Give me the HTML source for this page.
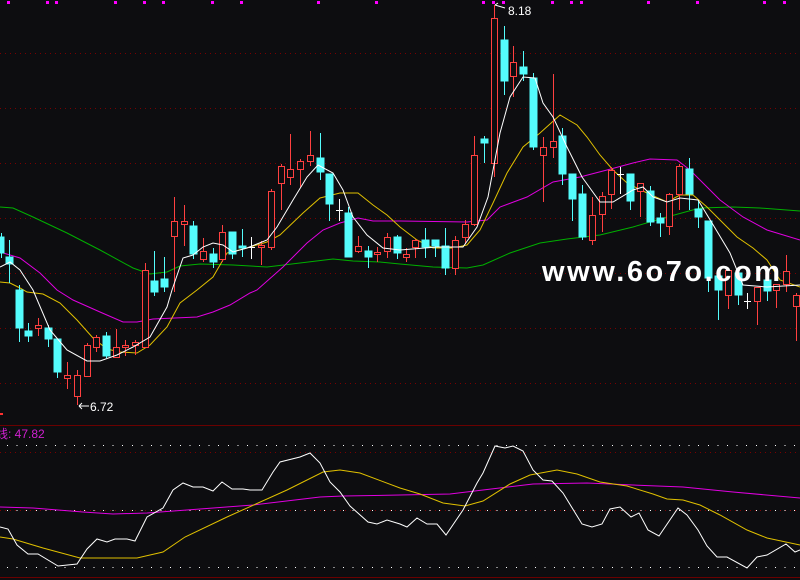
<!DOCTYPE html>
<html><head><meta charset="utf-8"><style>
html,body{margin:0;padding:0;background:#0d0d10;}
svg{display:block}
.t{font-family:"Liberation Sans","Noto Sans CJK SC",sans-serif}
</style></head><body>
<svg width="800" height="580" viewBox="0 0 800 580" xmlns="http://www.w3.org/2000/svg" shape-rendering="crispEdges">
<rect width="800" height="580" fill="#0d0d10"/>
<g stroke="#7a0000" stroke-width="1" stroke-dasharray="1,4">
<line x1="0" y1="53.5" x2="800" y2="53.5"/><line x1="0" y1="108.5" x2="800" y2="108.5"/>
<line x1="0" y1="163.5" x2="800" y2="163.5"/><line x1="0" y1="218.5" x2="800" y2="218.5"/>
<line x1="0" y1="273.5" x2="800" y2="273.5"/><line x1="0" y1="328.5" x2="800" y2="328.5"/>
<line x1="0" y1="383.5" x2="800" y2="383.5"/><line x1="0" y1="452.5" x2="800" y2="452.5"/>
<line x1="0" y1="510.5" x2="800" y2="510.5"/>
</g>
<g stroke="#ffffff" stroke-width="1" stroke-dasharray="1,8.6">
<line x1="7" y1="445.5" x2="800" y2="445.5"/><line x1="7" y1="510.5" x2="800" y2="510.5"/><line x1="7" y1="567.5" x2="800" y2="567.5"/>
</g>
<line x1="0" y1="425.5" x2="800" y2="425.5" stroke="#6a0000"/>
<line x1="0" y1="577.5" x2="800" y2="577.5" stroke="#6a0000"/>
<rect x="0" y="413" width="3" height="2" fill="#ff3030"/>
<g fill="#ff00ff">
<rect x="7" y="1" width="3" height="3"/><rect x="46" y="1" width="3" height="3"/><rect x="55" y="1" width="3" height="3"/><rect x="114" y="1" width="3" height="3"/><rect x="143" y="1" width="3" height="3"/><rect x="162" y="1" width="3" height="3"/><rect x="211" y="1" width="3" height="3"/><rect x="240" y="1" width="3" height="3"/><rect x="317" y="1" width="3" height="3"/><rect x="375" y="1" width="3" height="3"/>
<rect x="482" y="1" width="3" height="3"/><rect x="492" y="1" width="3" height="3"/><rect x="502" y="1" width="3" height="3"/><rect x="551" y="1" width="3" height="3"/><rect x="570" y="1" width="3" height="3"/><rect x="580" y="1" width="3" height="3"/><rect x="647" y="1" width="3" height="3"/><rect x="696" y="1" width="3" height="3"/><rect x="763" y="1" width="3" height="3"/><rect x="783" y="1" width="3" height="3"/>
</g>
<g fill="none" stroke-width="1" shape-rendering="auto">
<polyline stroke="#00b000" points="0,207 13,208 33,217 67,233 100,250 133,268 150,274 167,272 180,266 200,264 233,265 267,267 300,263 333,259 353,261 380,262 400,264 433,267 467,268 483,265 510,253 540,243 567,239 600,235 633,227 667,217 700,208 733,207 760,208 800,211"/>
<polyline stroke="#e000e0" points="0,252 20,258 40,273 57,290 73,300 100,312 123,322 137,322 153,319 197,317 213,312 230,305 250,293 257,290 283,267 307,243 323,230 340,223 358,218 373,221 400,221 467,222 487,220 500,207 527,197 553,182 580,177 607,170 633,163 650,159 677,160 690,170 707,187 720,200 743,217 767,230 800,240"/>
<polyline stroke="#e0c000" points="0,282 10,283 20,288 27,292 43,294 60,303 77,320 93,338 107,349 120,352 137,353 150,345 167,327 180,303 197,290 213,277 227,253 247,248 267,242 280,235 303,213 320,198 340,193 358,193 373,205 387,215 400,227 417,240 433,248 453,248 467,245 480,230 493,203 507,173 523,147 540,133 560,115 577,125 587,137 600,155 613,170 627,183 647,193 667,202 680,195 693,195 707,207 720,220 737,237 753,248 767,260 780,280 800,287"/>
</g>
<g stroke-width="1">
<g fill="#54fcfc" stroke="#54fcfc">
<line x1="1.5" y1="233" x2="1.5" y2="258"/><rect x="-2" y="237" width="6" height="16"/>
<line x1="9.5" y1="240" x2="9.5" y2="283"/><rect x="6" y="257" width="7" height="7"/>
<line x1="19.5" y1="285" x2="19.5" y2="342"/><rect x="16" y="290" width="7" height="38"/>
<line x1="28.5" y1="323" x2="28.5" y2="342"/><rect x="25" y="331" width="7" height="5"/>
<line x1="48.5" y1="325" x2="48.5" y2="347"/><rect x="45" y="328" width="7" height="11"/>
<line x1="57.5" y1="339" x2="57.5" y2="378"/><rect x="54" y="339" width="7" height="33"/>
<line x1="106.5" y1="332" x2="106.5" y2="358"/><rect x="103" y="336" width="7" height="20"/>
<line x1="154.5" y1="251" x2="154.5" y2="296"/><rect x="151" y="281" width="7" height="11"/>
<line x1="164.5" y1="257" x2="164.5" y2="292"/><rect x="161" y="279" width="7" height="8"/>
<line x1="193.5" y1="221" x2="193.5" y2="259"/><rect x="190" y="226" width="7" height="28"/>
<line x1="213.5" y1="248" x2="213.5" y2="268"/><rect x="210" y="254" width="7" height="8"/>
<line x1="232.5" y1="232" x2="232.5" y2="259"/><rect x="229" y="232" width="7" height="22"/>
<line x1="242.5" y1="229" x2="242.5" y2="257"/><rect x="239" y="246" width="7" height="2"/>
<line x1="320.5" y1="133" x2="320.5" y2="180"/><rect x="317" y="158" width="7" height="14"/>
<line x1="329.5" y1="174" x2="329.5" y2="221"/><rect x="326" y="174" width="7" height="30"/>
<line x1="348.5" y1="207" x2="348.5" y2="257"/><rect x="345" y="213" width="7" height="44"/>
<line x1="368.5" y1="246" x2="368.5" y2="268"/><rect x="365" y="251" width="7" height="6"/>
<line x1="397.5" y1="235" x2="397.5" y2="259"/><rect x="394" y="237" width="7" height="16"/>
<line x1="425.5" y1="228" x2="425.5" y2="258"/><rect x="422" y="240" width="7" height="7"/>
<line x1="435.5" y1="240" x2="435.5" y2="257"/><rect x="432" y="240" width="7" height="6"/>
<line x1="445.5" y1="228" x2="445.5" y2="275"/><rect x="442" y="246" width="7" height="22"/>
<line x1="484.5" y1="136" x2="484.5" y2="163"/><rect x="481" y="139" width="7" height="4"/>
<line x1="504.5" y1="26" x2="504.5" y2="95"/><rect x="501" y="40" width="7" height="41"/>
<line x1="523.5" y1="51" x2="523.5" y2="81"/><rect x="520" y="67" width="7" height="7"/>
<line x1="533.5" y1="73" x2="533.5" y2="150"/><rect x="530" y="78" width="7" height="69"/>
<line x1="562.5" y1="128" x2="562.5" y2="185"/><rect x="559" y="136" width="7" height="38"/>
<line x1="572.5" y1="174" x2="572.5" y2="221"/><rect x="569" y="174" width="7" height="25"/>
<line x1="582.5" y1="185" x2="582.5" y2="240"/><rect x="579" y="194" width="7" height="43"/>
<line x1="630.5" y1="174" x2="630.5" y2="210"/><rect x="627" y="174" width="7" height="27"/>
<line x1="650.5" y1="186" x2="650.5" y2="226"/><rect x="647" y="191" width="7" height="31"/>
<line x1="660.5" y1="213" x2="660.5" y2="237"/><rect x="657" y="218" width="7" height="5"/>
<line x1="689.5" y1="158" x2="689.5" y2="210"/><rect x="686" y="169" width="7" height="25"/>
<line x1="698.5" y1="200" x2="698.5" y2="228"/><rect x="695" y="209" width="7" height="8"/>
<line x1="708.5" y1="221" x2="708.5" y2="292"/><rect x="705" y="221" width="7" height="57"/>
<line x1="718.5" y1="276" x2="718.5" y2="320"/><rect x="715" y="276" width="7" height="14"/>
<line x1="738.5" y1="273" x2="738.5" y2="305"/><rect x="735" y="273" width="7" height="22"/>
<line x1="767.5" y1="280" x2="767.5" y2="301"/><rect x="764" y="280" width="7" height="11"/>
</g>
<g stroke="#ffffff">
<line x1="251.5" y1="237" x2="251.5" y2="259"/><line x1="248" y1="247.5" x2="255" y2="247.5"/>
<line x1="339.5" y1="199" x2="339.5" y2="221"/><line x1="336" y1="210.5" x2="343" y2="210.5"/>
<line x1="620.5" y1="167" x2="620.5" y2="194"/><line x1="617" y1="174.5" x2="624" y2="174.5"/>
<line x1="747.5" y1="293" x2="747.5" y2="309"/><line x1="744" y1="301.5" x2="751" y2="301.5"/>
</g>
<g stroke="#ff4040" fill="#0d0d10">
<line x1="38.5" y1="318" x2="38.5" y2="336"/><rect x="35.5" y="325.5" width="6" height="3"/>
<line x1="67.5" y1="362" x2="67.5" y2="389"/><rect x="64.5" y="375.5" width="6" height="3"/>
<line x1="77.5" y1="370" x2="77.5" y2="405"/><rect x="74.5" y="375.5" width="6" height="21"/>
<line x1="87.5" y1="343" x2="87.5" y2="376"/><rect x="84.5" y="345.5" width="6" height="31"/>
<line x1="96.5" y1="335" x2="96.5" y2="352"/><rect x="93.5" y="337.5" width="6" height="10"/>
<line x1="116.5" y1="329" x2="116.5" y2="357"/><rect x="113.5" y="347.5" width="6" height="10"/>
<line x1="125.5" y1="340" x2="125.5" y2="356"/><rect x="122.5" y="345.5" width="6" height="2"/>
<line x1="135.5" y1="340" x2="135.5" y2="355"/><rect x="132.5" y="342.5" width="6" height="3"/>
<line x1="145.5" y1="263" x2="145.5" y2="348"/><rect x="142.5" y="270.5" width="6" height="77"/>
<line x1="174.5" y1="197" x2="174.5" y2="292"/><rect x="171.5" y="221.5" width="6" height="15"/>
<line x1="184.5" y1="205" x2="184.5" y2="246"/><rect x="181.5" y="221.5" width="6" height="3"/>
<line x1="203.5" y1="238" x2="203.5" y2="262"/><rect x="200.5" y="251.5" width="6" height="8"/>
<line x1="222.5" y1="225" x2="222.5" y2="262"/><rect x="219.5" y="232.5" width="6" height="27"/>
<line x1="261.5" y1="241" x2="261.5" y2="265"/><rect x="258.5" y="245.5" width="6" height="2"/>
<line x1="271.5" y1="189" x2="271.5" y2="250"/><rect x="268.5" y="191.5" width="6" height="56"/>
<line x1="281.5" y1="164" x2="281.5" y2="210"/><rect x="278.5" y="166.5" width="6" height="17"/>
<line x1="290.5" y1="134" x2="290.5" y2="185"/><rect x="287.5" y="169.5" width="6" height="8"/>
<line x1="300.5" y1="159" x2="300.5" y2="187"/><rect x="297.5" y="161.5" width="6" height="8"/>
<line x1="310.5" y1="131" x2="310.5" y2="166"/><rect x="307.5" y="155.5" width="6" height="6"/>
<line x1="358.5" y1="236" x2="358.5" y2="253"/><rect x="355.5" y="246.5" width="6" height="5"/>
<line x1="377.5" y1="247" x2="377.5" y2="262"/><rect x="374.5" y="252.5" width="6" height="2"/>
<line x1="387.5" y1="233" x2="387.5" y2="258"/><rect x="384.5" y="237.5" width="6" height="14"/>
<line x1="406.5" y1="248" x2="406.5" y2="262"/><rect x="403.5" y="254.5" width="6" height="3"/>
<line x1="415.5" y1="239" x2="415.5" y2="258"/><rect x="412.5" y="240.5" width="6" height="7"/>
<line x1="455.5" y1="236" x2="455.5" y2="275"/><rect x="452.5" y="240.5" width="6" height="28"/>
<line x1="465.5" y1="220" x2="465.5" y2="244"/><rect x="462.5" y="224.5" width="6" height="13"/>
<line x1="474.5" y1="136" x2="474.5" y2="226"/><rect x="471.5" y="155.5" width="6" height="69"/>
<line x1="494.5" y1="5" x2="494.5" y2="177"/><rect x="491.5" y="18.5" width="6" height="145"/>
<line x1="513.5" y1="46" x2="513.5" y2="97"/><rect x="510.5" y="62.5" width="6" height="14"/>
<line x1="543.5" y1="137" x2="543.5" y2="202"/><rect x="540.5" y="147.5" width="6" height="8"/>
<line x1="553.5" y1="74" x2="553.5" y2="158"/><rect x="550.5" y="141.5" width="6" height="6"/>
<line x1="592.5" y1="197" x2="592.5" y2="245"/><rect x="589.5" y="215.5" width="6" height="25"/>
<line x1="602.5" y1="192" x2="602.5" y2="232"/><rect x="599.5" y="196.5" width="6" height="18"/>
<line x1="611.5" y1="167" x2="611.5" y2="209"/><rect x="608.5" y="170.5" width="6" height="24"/>
<line x1="640.5" y1="183" x2="640.5" y2="217"/><rect x="637.5" y="183.5" width="6" height="8"/>
<line x1="669.5" y1="193" x2="669.5" y2="235"/><rect x="666.5" y="194.5" width="6" height="32"/>
<line x1="679.5" y1="164" x2="679.5" y2="210"/><rect x="676.5" y="166.5" width="6" height="28"/>
<line x1="728.5" y1="270" x2="728.5" y2="309"/><rect x="725.5" y="270.5" width="6" height="25"/>
<line x1="757.5" y1="287" x2="757.5" y2="325"/><rect x="754.5" y="287.5" width="6" height="14"/>
<line x1="776.5" y1="284" x2="776.5" y2="308"/><rect x="773.5" y="284.5" width="6" height="6"/>
<line x1="786.5" y1="255" x2="786.5" y2="292"/><rect x="783.5" y="271.5" width="6" height="13"/>
<line x1="796.5" y1="293" x2="796.5" y2="341"/><rect x="793.5" y="295.5" width="6" height="11"/>
</g>
</g>
<polyline fill="none" stroke="#ffffff" stroke-width="1" shape-rendering="auto" points="0,267 10,262 20,270 33,290 50,330 67,350 87,361 100,361 117,355 133,347 150,337 167,307 172,290 183,258 193,255 203,247 213,243 223,245 233,252 247,248 267,240 277,227 293,200 307,177 318,165 333,173 343,190 353,217 367,235 383,248 400,250 437,247 463,247 477,227 488,197 500,133 510,97 523,77 535,78 543,103 553,117 567,147 582,177 600,202 613,202 633,190 643,187 653,197 667,202 680,198 698,200 712,223 730,253 743,285 767,287 800,285"/>
<g fill="none" stroke-width="1" shape-rendering="auto">
<polyline stroke="#e000e0" points="0,507 33,508 83,512 113,514 147,513 200,509 253,505 320,497 343,496 400,495 450,494 483,490 533,484 587,483 633,485 683,487 733,492 800,498"/>
<polyline stroke="#e0c000" points="0,537 13,539 43,548 80,558 137,558 163,552 185,537 227,517 287,490 323,472 340,470 360,473 400,488 420,494 443,503 465,506 483,501 510,484 530,475 557,470 577,474 600,482 627,486 653,494 667,499 683,500 700,505 720,515 747,530 767,538 800,545"/>
<polyline stroke="#ffffff" points="0,527 8,529 17,545 28,554 38,554 58,566 77,564 87,549 97,539 107,542 115,539 127,539 135,541 147,517 163,508 173,490 183,483 193,487 203,487 213,491 222,482 232,489 243,489 250,490 262,490 273,472 280,462 300,457 310,453 320,463 330,482 340,492 350,506 368,522 377,524 387,520 400,524 407,527 417,518 427,524 437,524 446,535 463,510 477,483 483,473 495,446 500,447 505,448 513,446 523,451 533,470 543,480 552,481 563,493 582,524 592,527 602,524 610,509 620,507 631,517 639,513 648,530 659,536 678,508 687,515 698,530 707,546 717,557 727,557 747,568 757,557 767,555 786,544 795,552 800,550"/>
</g>
<g shape-rendering="auto">
<line x1="495" y1="5" x2="505" y2="8" stroke="#fff"/><line x1="495" y1="5" x2="498" y2="3" stroke="#fff"/>
<text x="508" y="15" class="t" font-size="12" fill="#ffffff">8.18</text>
<line x1="79" y1="406" x2="89" y2="406" stroke="#fff"/><line x1="79" y1="406" x2="82" y2="403" stroke="#fff"/><line x1="79" y1="406" x2="82" y2="409" stroke="#fff"/>
<text x="90" y="411" class="t" font-size="12" fill="#ffffff">6.72</text>
<text x="-4" y="438" class="t" font-size="12" fill="#d020d0">线: 47.82</text>
<text x="542" y="281" class="t" font-size="29" font-weight="bold" fill="#ffffff" textLength="238" lengthAdjust="spacing">www.6o7o.com</text>
</g>
</svg>
</body></html>
